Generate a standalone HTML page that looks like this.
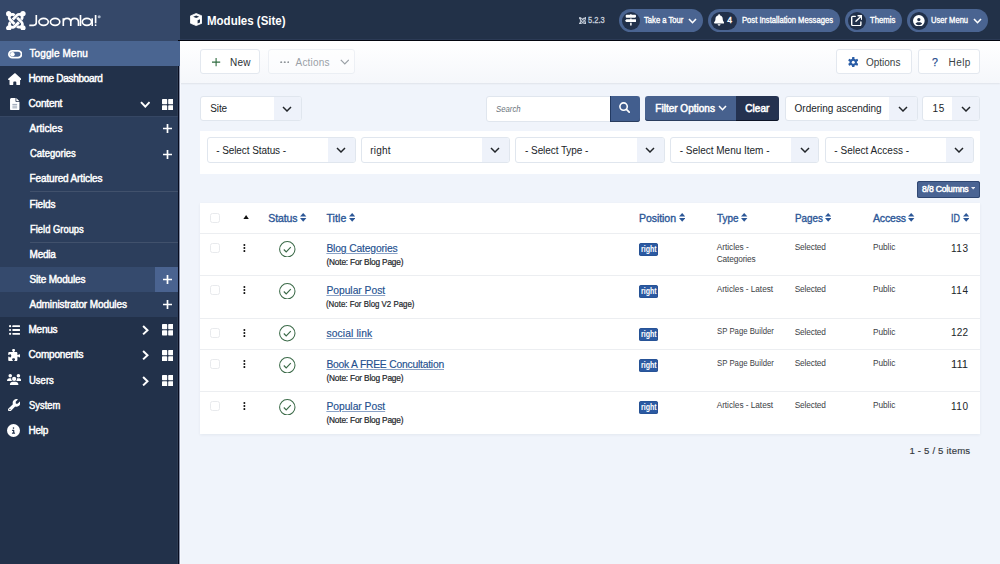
<!DOCTYPE html>
<html><head><meta charset="utf-8"><title>Modules (Site)</title>
<style>
html,body{margin:0;padding:0;width:1000px;height:564px;overflow:hidden;background:#f0f4fb;font-family:"Liberation Sans", sans-serif;}
body{position:relative;}
</style></head><body>
<div style="position:absolute;left:180px;top:41px;width:820px;height:41.5px;background:linear-gradient(#ffffff,#f5f7fb);box-shadow:0 1px 1.5px rgba(0,0,0,.07);"></div>
<div style="position:absolute;left:0px;top:0px;width:180px;height:564px;background:#22314a;"></div>
<div style="position:absolute;left:177px;top:66px;width:1px;height:498px;background:rgba(255,255,255,.05);"></div>
<div style="position:absolute;left:178px;top:66px;width:1px;height:498px;background:#070c1f;"></div>
<div style="position:absolute;left:179px;top:66px;width:1px;height:498px;background:#8a92a8;"></div>
<div style="position:absolute;left:178px;top:41px;width:2px;height:25px;background:#4a6591;"></div>
<div style="position:absolute;left:180px;top:83px;width:1px;height:481px;background:#f7f9fe;"></div>
<div style="position:absolute;left:0px;top:0px;width:180px;height:41px;background:#354869;"></div>
<div style="position:absolute;left:0px;top:41px;width:178px;height:25px;background:#4a6591;"></div>
<div style="position:absolute;left:0px;top:116.3px;width:178px;height:201.2px;background:#2c3e5c;box-shadow:inset 0 1px 0 rgba(255,255,255,.05);"></div>
<div style="position:absolute;left:30px;top:191.2px;width:148px;height:1.0px;background:rgba(255,255,255,.10);"></div>
<div style="position:absolute;left:30px;top:241.6px;width:148px;height:1.0px;background:rgba(255,255,255,.10);"></div>
<div style="position:absolute;left:0px;top:267.2px;width:178px;height:25.150000000000034px;background:#354a6d;"></div>
<div style="position:absolute;left:155px;top:267.2px;width:23px;height:25.150000000000034px;background:#4a6390;"></div>
<svg style="position:absolute;left:6px;top:10.8px;" width="19.7" height="19.7" viewBox="0 32 448 448"><g fill="#fff"><path transform="rotate(0 224 256)" d="M.6 92.1C.6 58.8 27.4 32 60.4 32c30 0 54.5 21.9 59.2 50.2 32.6-7.6 67.1.6 96.5 30l-44.3 44.3c-20.5-20.5-42.6-16.3-55.4-3.5-14.3 14.3-14.3 37.9 0 52.2l99.5 99.5-44 44.3c-87.7-87.2-49.7-49.7-99.8-99.7-26.8-26.5-35-64.8-24.8-98.9C25 161.2 .6 129.9 .6 92.1z"/><path transform="rotate(90 224 256)" d="M.6 92.1C.6 58.8 27.4 32 60.4 32c30 0 54.5 21.9 59.2 50.2 32.6-7.6 67.1.6 96.5 30l-44.3 44.3c-20.5-20.5-42.6-16.3-55.4-3.5-14.3 14.3-14.3 37.9 0 52.2l99.5 99.5-44 44.3c-87.7-87.2-49.7-49.7-99.8-99.7-26.8-26.5-35-64.8-24.8-98.9C25 161.2 .6 129.9 .6 92.1z"/><path transform="rotate(180 224 256)" d="M.6 92.1C.6 58.8 27.4 32 60.4 32c30 0 54.5 21.9 59.2 50.2 32.6-7.6 67.1.6 96.5 30l-44.3 44.3c-20.5-20.5-42.6-16.3-55.4-3.5-14.3 14.3-14.3 37.9 0 52.2l99.5 99.5-44 44.3c-87.7-87.2-49.7-49.7-99.8-99.7-26.8-26.5-35-64.8-24.8-98.9C25 161.2 .6 129.9 .6 92.1z"/><path transform="rotate(270 224 256)" d="M.6 92.1C.6 58.8 27.4 32 60.4 32c30 0 54.5 21.9 59.2 50.2 32.6-7.6 67.1.6 96.5 30l-44.3 44.3c-20.5-20.5-42.6-16.3-55.4-3.5-14.3 14.3-14.3 37.9 0 52.2l99.5 99.5-44 44.3c-87.7-87.2-49.7-49.7-99.8-99.7-26.8-26.5-35-64.8-24.8-98.9C25 161.2 .6 129.9 .6 92.1z"/></g></svg>
<svg style="position:absolute;left:28px;top:13px;" width="75" height="16" viewBox="0 0 75 16"><g stroke="#fff" stroke-width="1.65" fill="none">
<path d="M8.3 2 V9.6 Q8.3 12.3 5.5 12.3 H1.3"/>
<ellipse cx="15.6" cy="8.8" rx="4.7" ry="3.5"/>
<ellipse cx="27.1" cy="8.8" rx="4.7" ry="3.5"/>
<path d="M35.3 13 V5.3 M35.3 9.2 Q35.3 5.3 39.05 5.3 Q42.8 5.3 42.8 9.2 V13 M42.8 9.2 Q42.8 5.3 46.6 5.3 Q50.5 5.3 50.5 9.2 V13"/>
<path d="M52.5 2 V13"/>
<ellipse cx="58.9" cy="8.8" rx="4.6" ry="3.5"/><path d="M64.2 5.3 V13"/>
<path d="M67.6 2 V10.3"/>
</g><circle cx="67.6" cy="12.2" r="0.85" fill="#fff"/><circle cx="71.2" cy="3.8" r="1.5" fill="#aab6c8"/></svg>
<svg style="position:absolute;left:7.6px;top:50px;" width="14.4" height="8.6" viewBox="0 0 14.4 8.6"><rect x="0.9" y="0.9" width="12.6" height="6.8" rx="3.4" fill="none" stroke="#fff" stroke-width="1.8"/><circle cx="4.4" cy="4.3" r="2.3" fill="#fff"/></svg>
<div id="t1" style="position:absolute;left:29.40px;top:49.03px;font-size:10px;line-height:10px;font-weight:400;color:#fff;white-space:nowrap;-webkit-text-stroke:0.45px #fff;letter-spacing:0.123px;">Toggle Menu</div>
<div id="t2" style="position:absolute;left:28.40px;top:73.83px;font-size:10px;line-height:10px;font-weight:400;color:#fff;white-space:nowrap;-webkit-text-stroke:0.45px #fff;letter-spacing:-0.298px;">Home Dashboard</div>
<div id="t3" style="position:absolute;left:28.60px;top:98.98px;font-size:10px;line-height:10px;font-weight:400;color:#fff;white-space:nowrap;-webkit-text-stroke:0.45px #fff;letter-spacing:-0.205px;">Content</div>
<div id="t4" style="position:absolute;left:29.60px;top:124.13px;font-size:10px;line-height:10px;font-weight:400;color:#fff;white-space:nowrap;-webkit-text-stroke:0.45px #fff;letter-spacing:0.000px;">Articles</div>
<div id="t5" style="position:absolute;left:29.60px;top:149.28px;font-size:10px;line-height:10px;font-weight:400;color:#fff;white-space:nowrap;-webkit-text-stroke:0.45px #fff;transform:scaleX(0.9471);transform-origin:0 0;">Categories</div>
<div id="t6" style="position:absolute;left:29.60px;top:174.44px;font-size:10px;line-height:10px;font-weight:400;color:#fff;white-space:nowrap;-webkit-text-stroke:0.45px #fff;letter-spacing:-0.140px;">Featured Articles</div>
<div id="t7" style="position:absolute;left:29.60px;top:199.59px;font-size:10px;line-height:10px;font-weight:400;color:#fff;white-space:nowrap;-webkit-text-stroke:0.45px #fff;letter-spacing:-0.177px;">Fields</div>
<div id="t8" style="position:absolute;left:29.60px;top:224.73px;font-size:10px;line-height:10px;font-weight:400;color:#fff;white-space:nowrap;-webkit-text-stroke:0.45px #fff;transform:scaleX(0.9397);transform-origin:0 0;">Field Groups</div>
<div id="t9" style="position:absolute;left:29.60px;top:249.89px;font-size:10px;line-height:10px;font-weight:400;color:#fff;white-space:nowrap;-webkit-text-stroke:0.45px #fff;letter-spacing:-0.237px;">Media</div>
<div id="t10" style="position:absolute;left:29.60px;top:275.04px;font-size:10px;line-height:10px;font-weight:400;color:#fff;white-space:nowrap;-webkit-text-stroke:0.45px #fff;letter-spacing:-0.183px;">Site Modules</div>
<div id="t11" style="position:absolute;left:29.60px;top:300.19px;font-size:10px;line-height:10px;font-weight:400;color:#fff;white-space:nowrap;-webkit-text-stroke:0.45px #fff;letter-spacing:-0.109px;">Administrator Modules</div>
<div id="t12" style="position:absolute;left:28.60px;top:325.34px;font-size:10px;line-height:10px;font-weight:400;color:#fff;white-space:nowrap;-webkit-text-stroke:0.45px #fff;letter-spacing:-0.304px;">Menus</div>
<div id="t13" style="position:absolute;left:28.60px;top:350.49px;font-size:10px;line-height:10px;font-weight:400;color:#fff;white-space:nowrap;-webkit-text-stroke:0.45px #fff;letter-spacing:-0.211px;">Components</div>
<div id="t14" style="position:absolute;left:28.60px;top:375.64px;font-size:10px;line-height:10px;font-weight:400;color:#fff;white-space:nowrap;-webkit-text-stroke:0.45px #fff;transform:scaleX(0.9493);transform-origin:0 0;">Users</div>
<div id="t15" style="position:absolute;left:28.60px;top:400.79px;font-size:10px;line-height:10px;font-weight:400;color:#fff;white-space:nowrap;-webkit-text-stroke:0.45px #fff;transform:scaleX(0.9387);transform-origin:0 0;">System</div>
<div id="t16" style="position:absolute;left:28.60px;top:425.94px;font-size:10px;line-height:10px;font-weight:400;color:#fff;white-space:nowrap;-webkit-text-stroke:0.45px #fff;letter-spacing:-0.259px;">Help</div>
<svg style="position:absolute;left:7.6px;top:72.5px;" width="13.6" height="12.5" viewBox="0 0 576 512"><path fill="#fff" d="M575.8 255.5c0 18-15 32.1-32 32.1h-32l.7 160.2c0 2.7-.2 5.4-.5 8.1V472c0 22.1-17.9 40-40 40H456c-1.1 0-2.2 0-3.3-.1c-1.4 .1-2.8 .1-4.2 .1H416 392c-22.1 0-40-17.9-40-40V448 384c0-17.7-14.3-32-32-32H256c-17.7 0-32 14.3-32 32v64 24c0 22.1-17.9 40-40 40H160 128.1c-1.5 0-3-.1-4.5-.2c-1.2 .1-2.4 .2-3.6 .2H104c-22.1 0-40-17.9-40-40V360c0-.9 0-1.9 .1-2.8V287.6H32c-18 0-32-14-32-32.1c0-9 3-17 10-24L266.4 8c7-7 15-8 22-8s15 2 21 7L564.8 231.5c8 7 12 15 11 24z"/></svg>
<svg style="position:absolute;left:10px;top:97.8px;" width="9.5" height="12.6" viewBox="0 0 384 512"><path fill="#fff" d="M64 0C28.7 0 0 28.7 0 64V448c0 35.3 28.7 64 64 64H320c35.3 0 64-28.7 64-64V160H256c-17.7 0-32-14.3-32-32V0H64zM256 0V128H384L256 0z"/><g fill="#9aa5b5"><rect x="96" y="240" width="192" height="40"/><rect x="96" y="310" width="192" height="40"/><rect x="96" y="380" width="192" height="40"/></g></svg>
<svg style="position:absolute;left:139.7px;top:100.6px;" width="10.6" height="7.4" viewBox="0 0 10.6 7.4"><path d="M1 1.1 L5.3 5.6 L9.6 1.1" fill="none" stroke="#fff" stroke-width="2"/></svg>
<svg style="position:absolute;left:162.0px;top:98.8px;" width="11.4" height="11.4" viewBox="0 0 11.4 11.4"><g fill="#fff"><rect x="0" y="0" width="5.2" height="5.2" rx="0.7"/><rect x="6.2" y="0" width="5.2" height="5.2" rx="0.7"/><rect x="0" y="6.2" width="5.2" height="5.2" rx="0.7"/><rect x="6.2" y="6.2" width="5.2" height="5.2" rx="0.7"/></g></svg>
<svg style="position:absolute;left:163px;top:124.4px;" width="9" height="9" viewBox="0 0 9 9"><path d="M4.5 0 V9 M0 4.5 H9" stroke="#fff" stroke-width="1.7"/></svg>
<svg style="position:absolute;left:163px;top:149.55px;" width="9" height="9" viewBox="0 0 9 9"><path d="M4.5 0 V9 M0 4.5 H9" stroke="#fff" stroke-width="1.7"/></svg>
<svg style="position:absolute;left:163px;top:275.3px;" width="9" height="9" viewBox="0 0 9 9"><path d="M4.5 0 V9 M0 4.5 H9" stroke="#fff" stroke-width="1.7"/></svg>
<svg style="position:absolute;left:163px;top:300.4px;" width="9" height="9" viewBox="0 0 9 9"><path d="M4.5 0 V9 M0 4.5 H9" stroke="#fff" stroke-width="1.7"/></svg>
<svg style="position:absolute;left:142.2px;top:325.3px;" width="7" height="10.4" viewBox="0 0 7 10.4"><path d="M1.1 1 L5.5 5.2 L1.1 9.4" fill="none" stroke="#fff" stroke-width="2"/></svg>
<svg style="position:absolute;left:162.0px;top:324.40000000000003px;" width="11.4" height="11.4" viewBox="0 0 11.4 11.4"><g fill="#fff"><rect x="0" y="0" width="5.2" height="5.2" rx="0.7"/><rect x="6.2" y="0" width="5.2" height="5.2" rx="0.7"/><rect x="0" y="6.2" width="5.2" height="5.2" rx="0.7"/><rect x="6.2" y="6.2" width="5.2" height="5.2" rx="0.7"/></g></svg>
<svg style="position:absolute;left:142.2px;top:350.4px;" width="7" height="10.4" viewBox="0 0 7 10.4"><path d="M1.1 1 L5.5 5.2 L1.1 9.4" fill="none" stroke="#fff" stroke-width="2"/></svg>
<svg style="position:absolute;left:162.0px;top:349.5px;" width="11.4" height="11.4" viewBox="0 0 11.4 11.4"><g fill="#fff"><rect x="0" y="0" width="5.2" height="5.2" rx="0.7"/><rect x="6.2" y="0" width="5.2" height="5.2" rx="0.7"/><rect x="0" y="6.2" width="5.2" height="5.2" rx="0.7"/><rect x="6.2" y="6.2" width="5.2" height="5.2" rx="0.7"/></g></svg>
<svg style="position:absolute;left:142.2px;top:375.59999999999997px;" width="7" height="10.4" viewBox="0 0 7 10.4"><path d="M1.1 1 L5.5 5.2 L1.1 9.4" fill="none" stroke="#fff" stroke-width="2"/></svg>
<svg style="position:absolute;left:162.0px;top:374.7px;" width="11.4" height="11.4" viewBox="0 0 11.4 11.4"><g fill="#fff"><rect x="0" y="0" width="5.2" height="5.2" rx="0.7"/><rect x="6.2" y="0" width="5.2" height="5.2" rx="0.7"/><rect x="0" y="6.2" width="5.2" height="5.2" rx="0.7"/><rect x="6.2" y="6.2" width="5.2" height="5.2" rx="0.7"/></g></svg>
<svg style="position:absolute;left:8.8px;top:325.2px;" width="11.2" height="10" viewBox="0 0 11.2 10"><g fill="#fff"><circle cx="1.1" cy="1.2" r="1.1"/><circle cx="1.1" cy="5" r="1.1"/><circle cx="1.1" cy="8.8" r="1.1"/><rect x="3.2" y="0.3" width="8" height="1.8" rx="0.9"/><rect x="3.2" y="4.1" width="8" height="1.8" rx="0.9"/><rect x="3.2" y="7.9" width="8" height="1.8" rx="0.9"/></g></svg>
<svg style="position:absolute;left:7.6px;top:349px;" width="12.7" height="12.2" viewBox="0 0 512 512"><path fill="#fff" d="M192 104.8c0-9.2-5.8-17.3-13.2-22.8C167.2 73.3 160 61.3 160 48c0-26.5 28.7-48 64-48s64 21.5 64 48c0 13.3-7.2 25.3-18.8 34c-7.4 5.5-13.2 13.6-13.2 22.8c0 12.8 10.4 23.2 23.2 23.2H336c26.5 0 48 21.5 48 48v56.8c0 12.8 10.4 23.2 23.2 23.2c9.2 0 17.3-5.8 22.8-13.2c8.7-11.6 20.7-18.8 34-18.8c26.5 0 48 28.7 48 64s-21.5 64-48 64c-13.3 0-25.3-7.2-34-18.8c-5.5-7.4-13.6-13.2-22.8-13.2c-12.8 0-23.2 10.4-23.2 23.2V464c0 26.5-21.5 48-48 48H279.2c-12.8 0-23.2-10.4-23.2-23.2c0-9.2 5.8-17.3 13.2-22.8c11.6-8.7 18.8-20.7 18.8-34c0-26.5-28.7-48-64-48s-64 21.5-64 48c0 13.3 7.2 25.3 18.8 34c7.4 5.5 13.2 13.6 13.2 22.8c0 12.8-10.4 23.2-23.2 23.2H48c-26.5 0-48-21.5-48-48V343.2C0 330.4 10.4 320 23.2 320c9.2 0 17.3 5.8 22.8 13.2C54.7 344.8 66.7 352 80 352c26.5 0 48-28.7 48-64s-21.5-64-48-64c-13.3 0-25.3 7.2-34 18.8C40.5 250.2 32.4 256 23.2 256C10.4 256 0 245.6 0 232.8V176c0-26.5 21.5-48 48-48H168.8c12.8 0 23.2-10.4 23.2-23.2z"/></svg>
<svg style="position:absolute;left:7.1px;top:373.8px;" width="14.3" height="11.4" viewBox="0 0 640 512"><path fill="#fff" d="M144 0a80 80 0 1 1 0 160A80 80 0 1 1 144 0zM512 0a80 80 0 1 1 0 160A80 80 0 1 1 512 0zM0 298.7C0 239.8 47.8 192 106.7 192h42.7c15.9 0 31 3.5 44.6 9.7c-1.3 7.2-1.9 14.7-1.9 22.3c0 38.2 16.8 72.5 43.3 96c-.2 0-.4 0-.7 0H21.3C9.6 320 0 310.4 0 298.7zM405.3 320c-.2 0-.4 0-.7 0c26.6-23.5 43.3-57.8 43.3-96c0-7.6-.7-15-1.9-22.3c13.6-6.3 28.7-9.7 44.6-9.7h42.7C592.2 192 640 239.8 640 298.7c0 11.8-9.6 21.3-21.3 21.3H405.3zM224 224a96 96 0 1 1 192 0 96 96 0 1 1 -192 0zM128 485.3C128 411.7 187.7 352 261.3 352H378.7C452.3 352 512 411.7 512 485.3c0 14.7-11.9 26.7-26.7 26.7H154.7c-14.7 0-26.7-11.9-26.7-26.7z"/></svg>
<svg style="position:absolute;left:7.7px;top:398.6px;" width="12.4" height="12.4" viewBox="0 0 512 512"><path fill="#fff" d="M352 320c88.4 0 160-71.6 160-160c0-15.3-2.2-30.1-6.2-44.2c-3.1-10.8-16.4-13.2-24.3-5.3l-76.8 76.8c-3 3-7.1 4.7-11.3 4.7H336c-8.8 0-16-7.2-16-16V118.6c0-4.2 1.7-8.3 4.7-11.3l76.8-76.8c7.9-7.9 5.4-21.2-5.3-24.3C382.1 2.2 367.3 0 352 0C263.6 0 192 71.6 192 160c0 19.1 3.4 37.5 9.5 54.5L19.9 396.1C7.2 408.8 0 426.1 0 444.1C0 481.6 30.4 512 67.9 512c18 0 35.3-7.2 48-19.9L297.5 310.5c17 6.2 35.4 9.5 54.5 9.5zM80 408a24 24 0 1 1 0 48 24 24 0 1 1 0-48z"/></svg>
<svg style="position:absolute;left:7.2px;top:423.5px;" width="13" height="13" viewBox="0 0 512 512"><path fill="#fff" d="M256 512A256 256 0 1 0 256 0a256 256 0 1 0 0 512zM216 336h24V272H216c-13.3 0-24-10.7-24-24s10.7-24 24-24h48c13.3 0 24 10.7 24 24v88h8c13.3 0 24 10.7 24 24s-10.7 24-24 24H216c-13.3 0-24-10.7-24-24s10.7-24 24-24zm40-208a32 32 0 1 1 0 64 32 32 0 1 1 0-64z"/></svg>
<div style="position:absolute;left:180px;top:0px;width:820px;height:40px;background:#223148;"></div>
<div style="position:absolute;left:180px;top:39px;width:820px;height:1px;background:#2b3a55;"></div>
<div style="position:absolute;left:178px;top:40px;width:822px;height:1px;background:#03060f;"></div>
<svg style="position:absolute;left:189.7px;top:13px;" width="12.4" height="13" viewBox="0 0 12.4 13"><path fill="#fff" stroke="#fff" stroke-width="0.8" stroke-linejoin="round" d="M6.2 0.5 L11.9 2.9 V10.2 L6.2 12.6 L0.5 10.2 V2.9 Z"/><path fill="#223148" d="M6.2 2.6 L9.2 3.8 L6.2 5 L3.2 3.8Z"/><path fill="#223148" d="M7.6 7.2 L10 6.2 V9.6 L7.6 10.6Z"/></svg>
<div id="t17" style="position:absolute;left:206.90px;top:14.52px;font-size:12.5px;line-height:12.5px;font-weight:700;color:#fff;white-space:nowrap;transform:scaleX(0.9201);transform-origin:0 0;">Modules (Site)</div>
<svg style="position:absolute;left:578.7px;top:16.5px;" width="7.6" height="7.6" viewBox="0 32 448 448"><g fill="#c8d0dc"><path transform="rotate(0 224 256)" d="M.6 92.1C.6 58.8 27.4 32 60.4 32c30 0 54.5 21.9 59.2 50.2 32.6-7.6 67.1.6 96.5 30l-44.3 44.3c-20.5-20.5-42.6-16.3-55.4-3.5-14.3 14.3-14.3 37.9 0 52.2l99.5 99.5-44 44.3c-87.7-87.2-49.7-49.7-99.8-99.7-26.8-26.5-35-64.8-24.8-98.9C25 161.2 .6 129.9 .6 92.1z"/><path transform="rotate(90 224 256)" d="M.6 92.1C.6 58.8 27.4 32 60.4 32c30 0 54.5 21.9 59.2 50.2 32.6-7.6 67.1.6 96.5 30l-44.3 44.3c-20.5-20.5-42.6-16.3-55.4-3.5-14.3 14.3-14.3 37.9 0 52.2l99.5 99.5-44 44.3c-87.7-87.2-49.7-49.7-99.8-99.7-26.8-26.5-35-64.8-24.8-98.9C25 161.2 .6 129.9 .6 92.1z"/><path transform="rotate(180 224 256)" d="M.6 92.1C.6 58.8 27.4 32 60.4 32c30 0 54.5 21.9 59.2 50.2 32.6-7.6 67.1.6 96.5 30l-44.3 44.3c-20.5-20.5-42.6-16.3-55.4-3.5-14.3 14.3-14.3 37.9 0 52.2l99.5 99.5-44 44.3c-87.7-87.2-49.7-49.7-99.8-99.7-26.8-26.5-35-64.8-24.8-98.9C25 161.2 .6 129.9 .6 92.1z"/><path transform="rotate(270 224 256)" d="M.6 92.1C.6 58.8 27.4 32 60.4 32c30 0 54.5 21.9 59.2 50.2 32.6-7.6 67.1.6 96.5 30l-44.3 44.3c-20.5-20.5-42.6-16.3-55.4-3.5-14.3 14.3-14.3 37.9 0 52.2l99.5 99.5-44 44.3c-87.7-87.2-49.7-49.7-99.8-99.7-26.8-26.5-35-64.8-24.8-98.9C25 161.2 .6 129.9 .6 92.1z"/></g></svg>
<div id="t18" style="position:absolute;left:587.66px;top:16.42px;font-size:8.6px;line-height:8.6px;font-weight:400;color:#c8d0dc;white-space:nowrap;-webkit-text-stroke:0.3px #c8d0dc;transform:scaleX(0.8726);transform-origin:0 0;">5.2.3</div>
<div style="position:absolute;left:619px;top:9px;width:84px;height:23px;background:#4a6491;border-radius:12px;"></div>
<div style="position:absolute;left:621.5px;top:11.5px;width:18.0px;height:18.0px;background:#21304a;border-radius:9px;"></div>
<div style="position:absolute;left:708px;top:9px;width:132px;height:23px;background:#4a6491;border-radius:12px;"></div>
<div style="position:absolute;left:710.5px;top:11.5px;width:26.5px;height:18.0px;background:#21304a;border-radius:9px;"></div>
<div style="position:absolute;left:845px;top:9px;width:57px;height:23px;background:#4a6491;border-radius:12px;"></div>
<div style="position:absolute;left:847.5px;top:11.5px;width:18.0px;height:18.0px;background:#21304a;border-radius:9px;"></div>
<div style="position:absolute;left:907px;top:9px;width:81px;height:23px;background:#4a6491;border-radius:12px;"></div>
<div style="position:absolute;left:909.5px;top:11.5px;width:18.0px;height:18.0px;background:#21304a;border-radius:9px;"></div>
<div id="t19" style="position:absolute;left:643.66px;top:16.42px;font-size:8.6px;line-height:8.6px;font-weight:400;color:#fff;white-space:nowrap;-webkit-text-stroke:0.35px #fff;transform:scaleX(0.8895);transform-origin:0 0;">Take a Tour</div>
<div id="t20" style="position:absolute;left:741.66px;top:16.32px;font-size:8.6px;line-height:8.6px;font-weight:400;color:#fff;white-space:nowrap;-webkit-text-stroke:0.35px #fff;transform:scaleX(0.8900);transform-origin:0 0;">Post Installation Messages</div>
<div id="t21" style="position:absolute;left:869.66px;top:16.32px;font-size:8.6px;line-height:8.6px;font-weight:400;color:#fff;white-space:nowrap;-webkit-text-stroke:0.35px #fff;transform:scaleX(0.9007);transform-origin:0 0;">Themis</div>
<div id="t22" style="position:absolute;left:931.46px;top:16.32px;font-size:8.6px;line-height:8.6px;font-weight:400;color:#fff;white-space:nowrap;-webkit-text-stroke:0.35px #fff;transform:scaleX(0.8824);transform-origin:0 0;">User Menu</div>
<div id="t23" style="position:absolute;left:727.16px;top:16.32px;font-size:8.6px;line-height:8.6px;font-weight:400;color:#fff;white-space:nowrap;-webkit-text-stroke:0.4px #fff;">4</div>
<svg style="position:absolute;left:687.5px;top:17.5px;" width="9" height="6.5" viewBox="0 0 9 6.5"><path d="M1 1 L4.5 4.7 L8 1" fill="none" stroke="#fff" stroke-width="1.6"/></svg>
<svg style="position:absolute;left:973px;top:17.5px;" width="9" height="6.5" viewBox="0 0 9 6.5"><path d="M1 1 L4.5 4.7 L8 1" fill="none" stroke="#fff" stroke-width="1.6"/></svg>
<svg style="position:absolute;left:624.6px;top:14.4px;" width="11.8" height="11.8" viewBox="0 0 512 512"><path fill="#fff" d="M224 32H64C46.3 32 32 46.3 32 64v64c0 17.7 14.3 32 32 32H441.4c4.2 0 8.3-1.7 11.3-4.7l48-48c6.2-6.2 6.2-16.4 0-22.6l-48-48c-3-3-7.1-4.7-11.3-4.7H288c0-17.7-14.3-32-32-32s-32 14.3-32 32zM480 256c0-17.7-14.3-32-32-32H288V192H224v32H70.6c-4.2 0-8.3 1.7-11.3 4.7l-48 48c-6.2 6.2-6.2 16.4 0 22.6l48 48c3 3 7.1 4.7 11.3 4.7H448c17.7 0 32-14.3 32-32V256zM288 480V384H224v96c0 17.7 14.3 32 32 32s32-14.3 32-32z"/></svg>
<svg style="position:absolute;left:714px;top:14.3px;" width="10.2" height="11.7" viewBox="0 0 448 512"><path fill="#fff" d="M224 0c-17.7 0-32 14.3-32 32V51.2C119 66 64 130.6 64 208v18.8c0 47-17.3 92.4-48.5 127.6l-7.4 8.3c-8.4 9.4-10.4 22.9-5.3 34.4S19.4 416 32 416H416c12.6 0 24-7.4 29.2-18.9s3.1-25-5.3-34.4l-7.4-8.3C401.3 319.2 384 273.9 384 226.8V208c0-77.4-55-142-128-156.8V32c0-17.7-14.3-32-32-32zm45.3 493.3c12-12 18.7-28.3 18.7-45.3H224 160c0 17 6.7 33.3 18.7 45.3s28.3 18.7 45.3 18.7s33.3-6.7 45.3-18.7z"/></svg>
<svg style="position:absolute;left:850.5px;top:14.6px;" width="11.3" height="11.3" viewBox="0 0 512 512"><path fill="#fff" d="M320 0c-17.7 0-32 14.3-32 32s14.3 32 32 32h82.7L201.4 265.4c-12.5 12.5-12.5 32.8 0 45.3s32.8 12.5 45.3 0L448 109.3V192c0 17.7 14.3 32 32 32s32-14.3 32-32V32c0-17.7-14.3-32-32-32H320zM80 32C35.8 32 0 67.8 0 112V432c0 44.2 35.8 80 80 80H400c44.2 0 80-35.8 80-80V320c0-17.7-14.3-32-32-32s-32 14.3-32 32V432c0 8.8-7.2 16-16 16H80c-8.8 0-16-7.2-16-16V112c0-8.8 7.2-16 16-16H192c17.7 0 32-14.3 32-32s-14.3-32-32-32H80z"/></svg>
<svg style="position:absolute;left:913px;top:14.6px;" width="11.7" height="11.7" viewBox="0 0 512 512"><path fill="#fff" d="M399 384.2C376.9 345.8 335.4 320 288 320H224c-47.4 0-88.9 25.8-111 64.2c35.2 39.2 86.2 63.8 143 63.8s107.8-24.7 143-63.8zM0 256a256 256 0 1 1 512 0A256 256 0 1 1 0 256zm256 16a72 72 0 1 0 0-144 72 72 0 1 0 0 144z"/></svg>
<div style="position:absolute;left:200.3px;top:49.4px;width:60.19999999999999px;height:24.9px;background:#fff;border:1px solid #e3e8ef;border-radius:3px;box-sizing:border-box;"></div>
<svg style="position:absolute;left:212.4px;top:58.4px;" width="8.2" height="8.2" viewBox="0 0 8.2 8.2"><path d="M4.1 0 V8.2 M0 4.1 H8.2" stroke="#2e6b3f" stroke-width="1.1"/></svg>
<div id="t24" style="position:absolute;left:230.10px;top:57.63px;font-size:10px;line-height:10px;font-weight:400;color:#2b3035;white-space:nowrap;letter-spacing:0.142px;">New</div>
<div style="position:absolute;left:268.2px;top:49.4px;width:87.30000000000001px;height:24.9px;background:#fff;border:1px solid #e3e8ef;border-radius:3px;box-sizing:border-box;opacity:.55;"></div>
<svg style="position:absolute;left:279.8px;top:60.5px;opacity:.6" width="9.5" height="2.5" viewBox="0 0 9.5 2.5"><g fill="#495057"><circle cx="1.2" cy="1.2" r="1"/><circle cx="4.75" cy="1.2" r="1"/><circle cx="8.3" cy="1.2" r="1"/></g></svg>
<div id="t25" style="position:absolute;left:295.60px;top:57.63px;font-size:10px;line-height:10px;font-weight:400;color:#9aa0a6;white-space:nowrap;letter-spacing:0.167px;">Actions</div>
<svg style="position:absolute;left:339.6px;top:59.2px;" width="9.6" height="6.2" viewBox="0 0 9.6 6.2"><path d="M0.8 0.8 L4.8 4.9 L8.8 0.8" fill="none" stroke="#9aa0a6" stroke-width="1.2"/></svg>
<div style="position:absolute;left:836px;top:49.4px;width:75.60000000000002px;height:24.9px;background:#fff;border:1px solid #e3e8ef;border-radius:3px;box-sizing:border-box;"></div>
<svg style="position:absolute;left:847.8px;top:56.5px;" width="10.5" height="10.5" viewBox="0 0 10.5 10.5"><g fill="#2a5da6"><circle cx="5.25" cy="5.25" r="3.6"/><g transform="translate(5.25 5.25)"><rect x="-1.2" y="-5.25" width="2.4" height="10.5" rx="0.6"/><rect x="-1.2" y="-5.25" width="2.4" height="10.5" rx="0.6" transform="rotate(60)"/><rect x="-1.2" y="-5.25" width="2.4" height="10.5" rx="0.6" transform="rotate(120)"/></g></g><circle cx="5.25" cy="5.25" r="1.5" fill="#fff"/></svg>
<div id="t26" style="position:absolute;left:866.00px;top:57.63px;font-size:10px;line-height:10px;font-weight:400;color:#3a3f44;white-space:nowrap;letter-spacing:-0.011px;">Options</div>
<div style="position:absolute;left:918.4px;top:49.4px;width:61.80000000000007px;height:24.9px;background:#fff;border:1px solid #e3e8ef;border-radius:3px;box-sizing:border-box;"></div>
<div id="t27" style="position:absolute;left:931.88px;top:57.33px;font-size:10.6px;line-height:10.6px;font-weight:400;color:#2a4f8f;white-space:nowrap;-webkit-text-stroke:0.25px #2a4f8f;">?</div>
<div id="t28" style="position:absolute;left:948.60px;top:57.63px;font-size:10px;line-height:10px;font-weight:400;color:#3a3f44;white-space:nowrap;letter-spacing:0.407px;">Help</div>
<div style="position:absolute;left:200.2px;top:96px;width:101.40000000000003px;height:25.400000000000006px;background:#fff;border:1px solid #e0e6ee;border-radius:3px;box-sizing:border-box;"></div>
<div style="position:absolute;left:273.6px;top:97px;width:27.0px;height:23.400000000000006px;background:#eef2fa;border-radius:0 2px 2px 0;"></div>
<div id="t29" style="position:absolute;left:210.20px;top:103.53px;font-size:10px;line-height:10px;font-weight:400;color:#212529;white-space:nowrap;letter-spacing:-0.078px;">Site</div>
<svg style="position:absolute;left:282.3px;top:105.7px;" width="10" height="6.5" viewBox="0 0 10 6.5"><path d="M1 1 L5 5 L9 1" fill="none" stroke="#212529" stroke-width="1.45"/></svg>
<div style="position:absolute;left:486px;top:96px;width:125px;height:25.5px;background:#fff;border:1px solid #e0e6ee;border-radius:3px;box-sizing:border-box;border-radius:3px 0 0 3px;"></div>
<div id="t30" style="position:absolute;left:495.66px;top:105.22px;font-size:8.6px;line-height:8.6px;font-weight:400;color:#6c757d;white-space:nowrap;font-style:italic;transform:scaleX(0.9065);transform-origin:0 0;">Search</div>
<div style="position:absolute;left:610px;top:96px;width:30px;height:25.5px;background:#425e8e;border-radius:0 3px 3px 0;box-shadow:inset 1px 0 0 #233a62, inset 0 -1px 0 #2a3d5e;"></div>
<svg style="position:absolute;left:619.3px;top:102.4px;" width="11" height="11" viewBox="0 0 11 11"><circle cx="4.6" cy="4.6" r="3.7" fill="none" stroke="#fff" stroke-width="1.6"/><path d="M7.4 7.4 L10.2 10.2" stroke="#fff" stroke-width="1.7" stroke-linecap="round"/></svg>
<div style="position:absolute;left:645.2px;top:96px;width:90.79999999999995px;height:25px;background:#47618e;border-radius:3px 0 0 3px;box-shadow:inset 0 -1px 0 #2a3d5e;"></div>
<div style="position:absolute;left:736px;top:96px;width:42.700000000000045px;height:25px;background:#243250;border-radius:0 3px 3px 0;box-shadow:inset 0 -1px 0 #0d1426;"></div>
<div id="t31" style="position:absolute;left:655.30px;top:103.73px;font-size:10px;line-height:10px;font-weight:400;color:#fff;white-space:nowrap;-webkit-text-stroke:0.5px #fff;letter-spacing:0.010px;">Filter Options</div>
<svg style="position:absolute;left:717.5px;top:105px;" width="9" height="6.5" viewBox="0 0 9 6.5"><path d="M1 1 L4.5 4.7 L8 1" fill="none" stroke="#fff" stroke-width="1.6"/></svg>
<div id="t32" style="position:absolute;left:745.30px;top:103.73px;font-size:10px;line-height:10px;font-weight:400;color:#fff;white-space:nowrap;-webkit-text-stroke:0.55px #fff;letter-spacing:0.048px;">Clear</div>
<div style="position:absolute;left:784.6px;top:96px;width:133.0px;height:25.400000000000006px;background:#fff;border:1px solid #e0e6ee;border-radius:3px;box-sizing:border-box;"></div>
<div style="position:absolute;left:888.6px;top:97px;width:28.0px;height:23.400000000000006px;background:#eef2fa;border-radius:0 2px 2px 0;"></div>
<div id="t33" style="position:absolute;left:794.60px;top:103.73px;font-size:10px;line-height:10px;font-weight:400;color:#212529;white-space:nowrap;letter-spacing:-0.011px;">Ordering ascending</div>
<svg style="position:absolute;left:898.2px;top:105.7px;" width="10" height="6.5" viewBox="0 0 10 6.5"><path d="M1 1 L5 5 L9 1" fill="none" stroke="#212529" stroke-width="1.45"/></svg>
<div style="position:absolute;left:922.4px;top:96px;width:57.200000000000045px;height:25.400000000000006px;background:#fff;border:1px solid #e0e6ee;border-radius:3px;box-sizing:border-box;"></div>
<div style="position:absolute;left:951.6px;top:97px;width:27.0px;height:23.400000000000006px;background:#eef2fa;border-radius:0 2px 2px 0;"></div>
<div id="t34" style="position:absolute;left:932.60px;top:103.73px;font-size:10px;line-height:10px;font-weight:400;color:#212529;white-space:nowrap;letter-spacing:0.675px;">15</div>
<svg style="position:absolute;left:960.5px;top:105.7px;" width="10" height="6.5" viewBox="0 0 10 6.5"><path d="M1 1 L5 5 L9 1" fill="none" stroke="#212529" stroke-width="1.45"/></svg>
<div style="position:absolute;left:200px;top:131px;width:780px;height:43px;background:#fff;"></div>
<div style="position:absolute;left:206.5px;top:137.2px;width:149.2px;height:25.5px;background:#fff;border:1px solid #e0e6ee;border-radius:3px;box-sizing:border-box;"></div>
<div style="position:absolute;left:327.7px;top:138.2px;width:27.0px;height:23.5px;background:#eef2fa;border-radius:0 2px 2px 0;"></div>
<div id="t35" style="position:absolute;left:216.20px;top:145.63px;font-size:10px;line-height:10px;font-weight:400;color:#212529;white-space:nowrap;letter-spacing:-0.078px;">- Select Status -</div>
<svg style="position:absolute;left:336.2px;top:146.95px;" width="10" height="6.5" viewBox="0 0 10 6.5"><path d="M1 1 L5 5 L9 1" fill="none" stroke="#212529" stroke-width="1.45"/></svg>
<div style="position:absolute;left:360.6px;top:137.2px;width:149.2px;height:25.5px;background:#fff;border:1px solid #e0e6ee;border-radius:3px;box-sizing:border-box;"></div>
<div style="position:absolute;left:481.8px;top:138.2px;width:27.0px;height:23.5px;background:#eef2fa;border-radius:0 2px 2px 0;"></div>
<div id="t36" style="position:absolute;left:370.30px;top:145.63px;font-size:10px;line-height:10px;font-weight:400;color:#212529;white-space:nowrap;letter-spacing:0.212px;">right</div>
<svg style="position:absolute;left:490.3px;top:146.95px;" width="10" height="6.5" viewBox="0 0 10 6.5"><path d="M1 1 L5 5 L9 1" fill="none" stroke="#212529" stroke-width="1.45"/></svg>
<div style="position:absolute;left:515.4px;top:137.2px;width:149.19999999999993px;height:25.5px;background:#fff;border:1px solid #e0e6ee;border-radius:3px;box-sizing:border-box;"></div>
<div style="position:absolute;left:636.5999999999999px;top:138.2px;width:27.0px;height:23.5px;background:#eef2fa;border-radius:0 2px 2px 0;"></div>
<div id="t37" style="position:absolute;left:525.10px;top:145.63px;font-size:10px;line-height:10px;font-weight:400;color:#212529;white-space:nowrap;letter-spacing:-0.078px;">- Select Type -</div>
<svg style="position:absolute;left:645.0999999999999px;top:146.95px;" width="10" height="6.5" viewBox="0 0 10 6.5"><path d="M1 1 L5 5 L9 1" fill="none" stroke="#212529" stroke-width="1.45"/></svg>
<div style="position:absolute;left:670px;top:137.2px;width:149.20000000000005px;height:25.5px;background:#fff;border:1px solid #e0e6ee;border-radius:3px;box-sizing:border-box;"></div>
<div style="position:absolute;left:791.2px;top:138.2px;width:27.0px;height:23.5px;background:#eef2fa;border-radius:0 2px 2px 0;"></div>
<div id="t38" style="position:absolute;left:679.70px;top:145.63px;font-size:10px;line-height:10px;font-weight:400;color:#212529;white-space:nowrap;letter-spacing:-0.012px;">- Select Menu Item -</div>
<svg style="position:absolute;left:799.7px;top:146.95px;" width="10" height="6.5" viewBox="0 0 10 6.5"><path d="M1 1 L5 5 L9 1" fill="none" stroke="#212529" stroke-width="1.45"/></svg>
<div style="position:absolute;left:824.6px;top:137.2px;width:149.19999999999993px;height:25.5px;background:#fff;border:1px solid #e0e6ee;border-radius:3px;box-sizing:border-box;"></div>
<div style="position:absolute;left:945.8px;top:138.2px;width:27.0px;height:23.5px;background:#eef2fa;border-radius:0 2px 2px 0;"></div>
<div id="t39" style="position:absolute;left:834.30px;top:145.63px;font-size:10px;line-height:10px;font-weight:400;color:#212529;white-space:nowrap;letter-spacing:0.021px;">- Select Access -</div>
<svg style="position:absolute;left:954.3px;top:146.95px;" width="10" height="6.5" viewBox="0 0 10 6.5"><path d="M1 1 L5 5 L9 1" fill="none" stroke="#212529" stroke-width="1.45"/></svg>
<div style="position:absolute;left:917px;top:180.5px;width:62.5px;height:17.0px;background:#4a6493;border-radius:2.5px;box-shadow:inset 0 0 0 0.9px #2f4670;"></div>
<div id="t40" style="position:absolute;left:922.06px;top:184.92px;font-size:8.6px;line-height:8.6px;font-weight:400;color:#fff;white-space:nowrap;-webkit-text-stroke:0.5px #fff;letter-spacing:-0.166px;">8/8 Columns</div>
<svg style="position:absolute;left:970.8px;top:187.2px;" width="4.4" height="2.6" viewBox="0 0 4.4 2.6"><path d="M0 0 H4.4 L2.2 2.6Z" fill="#e8ecf4"/></svg>
<div style="position:absolute;left:200px;top:203px;width:780px;height:231px;background:#fff;box-shadow:0 1px 3px rgba(20,30,50,.06);"></div>
<div style="position:absolute;left:200px;top:233px;width:780px;height:1px;background:#eceef1;"></div>
<div style="position:absolute;left:200px;top:275px;width:780px;height:1px;background:#eceef1;"></div>
<div style="position:absolute;left:200px;top:317.5px;width:780px;height:1.0px;background:#eceef1;"></div>
<div style="position:absolute;left:200px;top:349px;width:780px;height:1px;background:#eceef1;"></div>
<div style="position:absolute;left:200px;top:391px;width:780px;height:1px;background:#eceef1;"></div>
<div style="position:absolute;left:210.2px;top:213px;width:10.100000000000023px;height:10.199999999999989px;border:1px solid #e8eaed;border-radius:2.5px;box-sizing:border-box;background:#fff;"></div>
<svg style="position:absolute;left:242.5px;top:214.8px;" width="6.2" height="4.6" viewBox="0 0 6.2 4.6"><path d="M0 4.6 L3.1 0 L6.2 4.6Z" fill="#111"/></svg>
<div id="t41" style="position:absolute;left:268.28px;top:213.21px;font-size:10.5px;line-height:10.5px;font-weight:400;color:#2c5797;white-space:nowrap;-webkit-text-stroke:0.35px #2c5797;letter-spacing:-0.088px;">Status</div>
<svg style="position:absolute;left:300.2px;top:213.3px;" width="6.4" height="8.7" viewBox="0 0 6.4 8.7"><g fill="#2c5797"><path d="M3.2 0 L6.4 3.6 H0Z"/><path d="M3.2 8.7 L6.4 5.1 H0Z"/></g></svg>
<div id="t42" style="position:absolute;left:326.38px;top:213.21px;font-size:10.5px;line-height:10.5px;font-weight:400;color:#2c5797;white-space:nowrap;-webkit-text-stroke:0.35px #2c5797;letter-spacing:0.147px;">Title</div>
<svg style="position:absolute;left:348.8px;top:213.3px;" width="6.4" height="8.7" viewBox="0 0 6.4 8.7"><g fill="#2c5797"><path d="M3.2 0 L6.4 3.6 H0Z"/><path d="M3.2 8.7 L6.4 5.1 H0Z"/></g></svg>
<div id="t43" style="position:absolute;left:638.98px;top:213.21px;font-size:10.5px;line-height:10.5px;font-weight:400;color:#2c5797;white-space:nowrap;-webkit-text-stroke:0.35px #2c5797;letter-spacing:-0.046px;">Position</div>
<svg style="position:absolute;left:678.5px;top:213.3px;" width="6.4" height="8.7" viewBox="0 0 6.4 8.7"><g fill="#2c5797"><path d="M3.2 0 L6.4 3.6 H0Z"/><path d="M3.2 8.7 L6.4 5.1 H0Z"/></g></svg>
<div id="t44" style="position:absolute;left:717.18px;top:213.21px;font-size:10.5px;line-height:10.5px;font-weight:400;color:#2c5797;white-space:nowrap;-webkit-text-stroke:0.35px #2c5797;transform:scaleX(0.9462);transform-origin:0 0;">Type</div>
<svg style="position:absolute;left:741.4px;top:213.3px;" width="6.4" height="8.7" viewBox="0 0 6.4 8.7"><g fill="#2c5797"><path d="M3.2 0 L6.4 3.6 H0Z"/><path d="M3.2 8.7 L6.4 5.1 H0Z"/></g></svg>
<div id="t45" style="position:absolute;left:794.98px;top:213.21px;font-size:10.5px;line-height:10.5px;font-weight:400;color:#2c5797;white-space:nowrap;-webkit-text-stroke:0.35px #2c5797;transform:scaleX(0.9415);transform-origin:0 0;">Pages</div>
<svg style="position:absolute;left:825px;top:213.3px;" width="6.4" height="8.7" viewBox="0 0 6.4 8.7"><g fill="#2c5797"><path d="M3.2 0 L6.4 3.6 H0Z"/><path d="M3.2 8.7 L6.4 5.1 H0Z"/></g></svg>
<div id="t46" style="position:absolute;left:872.98px;top:213.21px;font-size:10.5px;line-height:10.5px;font-weight:400;color:#2c5797;white-space:nowrap;-webkit-text-stroke:0.35px #2c5797;letter-spacing:-0.161px;">Access</div>
<svg style="position:absolute;left:908.2px;top:213.3px;" width="6.4" height="8.7" viewBox="0 0 6.4 8.7"><g fill="#2c5797"><path d="M3.2 0 L6.4 3.6 H0Z"/><path d="M3.2 8.7 L6.4 5.1 H0Z"/></g></svg>
<div id="t47" style="position:absolute;left:951.18px;top:213.21px;font-size:10.5px;line-height:10.5px;font-weight:400;color:#2c5797;white-space:nowrap;-webkit-text-stroke:0.35px #2c5797;transform:scaleX(0.8419);transform-origin:0 0;">ID</div>
<svg style="position:absolute;left:962.6px;top:213.3px;" width="6.4" height="8.7" viewBox="0 0 6.4 8.7"><g fill="#2c5797"><path d="M3.2 0 L6.4 3.6 H0Z"/><path d="M3.2 8.7 L6.4 5.1 H0Z"/></g></svg>
<div style="position:absolute;left:210.2px;top:243.3px;width:10.100000000000023px;height:10.199999999999989px;border:1px solid #e8eaed;border-radius:2.5px;box-sizing:border-box;background:#fff;"></div>
<svg style="position:absolute;left:242.8px;top:244px;" width="3" height="8.2" viewBox="0 0 3 8.2"><g fill="#111"><circle cx="1.4" cy="1.1" r="1"/><circle cx="1.4" cy="4.1" r="1"/><circle cx="1.4" cy="7.1" r="1"/></g></svg>
<svg style="position:absolute;left:279.3px;top:240.8px;" width="16.6" height="16.6" viewBox="0 0 16.6 16.6"><circle cx="8.3" cy="8.3" r="7.7" fill="none" stroke="#3b6a48" stroke-width="1.05"/><path d="M4.8 8.5 L7.2 10.9 L11.8 6.2" fill="none" stroke="#3b6a48" stroke-width="1.15"/></svg>
<div id="t48" style="position:absolute;left:326.39px;top:244.08px;font-size:10.3px;line-height:10.3px;font-weight:400;color:#24508f;white-space:nowrap;-webkit-text-stroke:0.15px #24508f;letter-spacing:-0.139px;text-decoration:underline;text-underline-offset:1px;text-decoration-thickness:1px;text-decoration-color:rgba(60,100,160,.6);">Blog Categories</div>
<div id="t49" style="position:absolute;left:326.47px;top:257.67px;font-size:8.3px;line-height:8.3px;font-weight:400;color:#212529;white-space:nowrap;-webkit-text-stroke:0.2px #212529;letter-spacing:-0.187px;">(Note: For Blog Page)</div>
<div style="position:absolute;left:638.8px;top:243px;width:19.600000000000023px;height:13.199999999999989px;background:#2c5aa2;border-radius:2.5px;box-shadow:inset 0 0 0 0.6px #234c8c;"></div>
<div id="t50" style="position:absolute;left:641.06px;top:245.22px;font-size:8.6px;line-height:8.6px;font-weight:700;color:#fff;white-space:nowrap;transform:scaleX(0.8216);transform-origin:0 0;">right</div>
<div id="t51" style="position:absolute;left:716.67px;top:242.77px;font-size:8.3px;line-height:8.3px;font-weight:400;color:#3c4146;white-space:nowrap;letter-spacing:-0.013px;">Articles -</div>
<div id="t52" style="position:absolute;left:716.67px;top:254.57px;font-size:8.3px;line-height:8.3px;font-weight:400;color:#3c4146;white-space:nowrap;letter-spacing:-0.129px;">Categories</div>
<div id="t53" style="position:absolute;left:794.67px;top:243.07px;font-size:8.3px;line-height:8.3px;font-weight:400;color:#3c4146;white-space:nowrap;letter-spacing:-0.148px;">Selected</div>
<div id="t54" style="position:absolute;left:873.07px;top:243.07px;font-size:8.3px;line-height:8.3px;font-weight:400;color:#3c4146;white-space:nowrap;letter-spacing:-0.069px;">Public</div>
<div id="t55" style="position:absolute;left:951.00px;top:243.73px;font-size:10px;line-height:10px;font-weight:400;color:#212529;white-space:nowrap;letter-spacing:0.523px;">113</div>
<div style="position:absolute;left:210.2px;top:285.3px;width:10.100000000000023px;height:10.199999999999989px;border:1px solid #e8eaed;border-radius:2.5px;box-sizing:border-box;background:#fff;"></div>
<svg style="position:absolute;left:242.8px;top:286px;" width="3" height="8.2" viewBox="0 0 3 8.2"><g fill="#111"><circle cx="1.4" cy="1.1" r="1"/><circle cx="1.4" cy="4.1" r="1"/><circle cx="1.4" cy="7.1" r="1"/></g></svg>
<svg style="position:absolute;left:279.3px;top:282.8px;" width="16.6" height="16.6" viewBox="0 0 16.6 16.6"><circle cx="8.3" cy="8.3" r="7.7" fill="none" stroke="#3b6a48" stroke-width="1.05"/><path d="M4.8 8.5 L7.2 10.9 L11.8 6.2" fill="none" stroke="#3b6a48" stroke-width="1.15"/></svg>
<div id="t56" style="position:absolute;left:326.39px;top:286.08px;font-size:10.3px;line-height:10.3px;font-weight:400;color:#24508f;white-space:nowrap;-webkit-text-stroke:0.15px #24508f;letter-spacing:-0.013px;text-decoration:underline;text-underline-offset:1px;text-decoration-thickness:1px;text-decoration-color:rgba(60,100,160,.6);">Popular Post</div>
<div id="t57" style="position:absolute;left:326.47px;top:299.67px;font-size:8.3px;line-height:8.3px;font-weight:400;color:#212529;white-space:nowrap;-webkit-text-stroke:0.2px #212529;transform:scaleX(0.9496);transform-origin:0 0;">(Note: For Blog V2 Page)</div>
<div style="position:absolute;left:638.8px;top:285px;width:19.600000000000023px;height:13.199999999999989px;background:#2c5aa2;border-radius:2.5px;box-shadow:inset 0 0 0 0.6px #234c8c;"></div>
<div id="t58" style="position:absolute;left:641.06px;top:287.22px;font-size:8.6px;line-height:8.6px;font-weight:700;color:#fff;white-space:nowrap;transform:scaleX(0.8216);transform-origin:0 0;">right</div>
<div id="t59" style="position:absolute;left:716.67px;top:284.77px;font-size:8.3px;line-height:8.3px;font-weight:400;color:#3c4146;white-space:nowrap;letter-spacing:-0.045px;">Articles - Latest</div>
<div id="t60" style="position:absolute;left:794.67px;top:285.07px;font-size:8.3px;line-height:8.3px;font-weight:400;color:#3c4146;white-space:nowrap;letter-spacing:-0.148px;">Selected</div>
<div id="t61" style="position:absolute;left:873.07px;top:285.07px;font-size:8.3px;line-height:8.3px;font-weight:400;color:#3c4146;white-space:nowrap;letter-spacing:-0.069px;">Public</div>
<div id="t62" style="position:absolute;left:951.00px;top:285.74px;font-size:10px;line-height:10px;font-weight:400;color:#212529;white-space:nowrap;letter-spacing:0.523px;">114</div>
<div style="position:absolute;left:210.2px;top:327.8px;width:10.100000000000023px;height:10.199999999999989px;border:1px solid #e8eaed;border-radius:2.5px;box-sizing:border-box;background:#fff;"></div>
<svg style="position:absolute;left:242.8px;top:328.5px;" width="3" height="8.2" viewBox="0 0 3 8.2"><g fill="#111"><circle cx="1.4" cy="1.1" r="1"/><circle cx="1.4" cy="4.1" r="1"/><circle cx="1.4" cy="7.1" r="1"/></g></svg>
<svg style="position:absolute;left:279.3px;top:325.3px;" width="16.6" height="16.6" viewBox="0 0 16.6 16.6"><circle cx="8.3" cy="8.3" r="7.7" fill="none" stroke="#3b6a48" stroke-width="1.05"/><path d="M4.8 8.5 L7.2 10.9 L11.8 6.2" fill="none" stroke="#3b6a48" stroke-width="1.15"/></svg>
<div id="t63" style="position:absolute;left:326.39px;top:328.58px;font-size:10.3px;line-height:10.3px;font-weight:400;color:#24508f;white-space:nowrap;-webkit-text-stroke:0.15px #24508f;letter-spacing:0.118px;text-decoration:underline;text-underline-offset:1px;text-decoration-thickness:1px;text-decoration-color:rgba(60,100,160,.6);">social link</div>
<div style="position:absolute;left:638.8px;top:327.5px;width:19.600000000000023px;height:13.199999999999989px;background:#2c5aa2;border-radius:2.5px;box-shadow:inset 0 0 0 0.6px #234c8c;"></div>
<div id="t64" style="position:absolute;left:641.06px;top:329.72px;font-size:8.6px;line-height:8.6px;font-weight:700;color:#fff;white-space:nowrap;transform:scaleX(0.8216);transform-origin:0 0;">right</div>
<div id="t65" style="position:absolute;left:716.67px;top:327.27px;font-size:8.3px;line-height:8.3px;font-weight:400;color:#3c4146;white-space:nowrap;transform:scaleX(0.9363);transform-origin:0 0;">SP Page Builder</div>
<div id="t66" style="position:absolute;left:794.67px;top:327.57px;font-size:8.3px;line-height:8.3px;font-weight:400;color:#3c4146;white-space:nowrap;letter-spacing:-0.148px;">Selected</div>
<div id="t67" style="position:absolute;left:873.07px;top:327.57px;font-size:8.3px;line-height:8.3px;font-weight:400;color:#3c4146;white-space:nowrap;letter-spacing:-0.069px;">Public</div>
<div id="t68" style="position:absolute;left:951.00px;top:328.24px;font-size:10px;line-height:10px;font-weight:400;color:#212529;white-space:nowrap;letter-spacing:0.156px;">122</div>
<div style="position:absolute;left:210.2px;top:359.3px;width:10.100000000000023px;height:10.199999999999989px;border:1px solid #e8eaed;border-radius:2.5px;box-sizing:border-box;background:#fff;"></div>
<svg style="position:absolute;left:242.8px;top:360px;" width="3" height="8.2" viewBox="0 0 3 8.2"><g fill="#111"><circle cx="1.4" cy="1.1" r="1"/><circle cx="1.4" cy="4.1" r="1"/><circle cx="1.4" cy="7.1" r="1"/></g></svg>
<svg style="position:absolute;left:279.3px;top:356.8px;" width="16.6" height="16.6" viewBox="0 0 16.6 16.6"><circle cx="8.3" cy="8.3" r="7.7" fill="none" stroke="#3b6a48" stroke-width="1.05"/><path d="M4.8 8.5 L7.2 10.9 L11.8 6.2" fill="none" stroke="#3b6a48" stroke-width="1.15"/></svg>
<div id="t69" style="position:absolute;left:326.39px;top:360.08px;font-size:10.3px;line-height:10.3px;font-weight:400;color:#24508f;white-space:nowrap;-webkit-text-stroke:0.15px #24508f;letter-spacing:-0.203px;text-decoration:underline;text-underline-offset:1px;text-decoration-thickness:1px;text-decoration-color:rgba(60,100,160,.6);">Book A FREE Concultation</div>
<div id="t70" style="position:absolute;left:326.47px;top:373.67px;font-size:8.3px;line-height:8.3px;font-weight:400;color:#212529;white-space:nowrap;-webkit-text-stroke:0.2px #212529;letter-spacing:-0.187px;">(Note: For Blog Page)</div>
<div style="position:absolute;left:638.8px;top:359px;width:19.600000000000023px;height:13.199999999999989px;background:#2c5aa2;border-radius:2.5px;box-shadow:inset 0 0 0 0.6px #234c8c;"></div>
<div id="t71" style="position:absolute;left:641.06px;top:361.22px;font-size:8.6px;line-height:8.6px;font-weight:700;color:#fff;white-space:nowrap;transform:scaleX(0.8216);transform-origin:0 0;">right</div>
<div id="t72" style="position:absolute;left:716.67px;top:358.77px;font-size:8.3px;line-height:8.3px;font-weight:400;color:#3c4146;white-space:nowrap;transform:scaleX(0.9363);transform-origin:0 0;">SP Page Builder</div>
<div id="t73" style="position:absolute;left:794.67px;top:359.07px;font-size:8.3px;line-height:8.3px;font-weight:400;color:#3c4146;white-space:nowrap;letter-spacing:-0.148px;">Selected</div>
<div id="t74" style="position:absolute;left:873.07px;top:359.07px;font-size:8.3px;line-height:8.3px;font-weight:400;color:#3c4146;white-space:nowrap;letter-spacing:-0.069px;">Public</div>
<div id="t75" style="position:absolute;left:951.00px;top:359.74px;font-size:10px;line-height:10px;font-weight:400;color:#212529;white-space:nowrap;transform:scaleX(1.1182);transform-origin:0 0;">111</div>
<div style="position:absolute;left:210.2px;top:401.3px;width:10.100000000000023px;height:10.199999999999989px;border:1px solid #e8eaed;border-radius:2.5px;box-sizing:border-box;background:#fff;"></div>
<svg style="position:absolute;left:242.8px;top:402px;" width="3" height="8.2" viewBox="0 0 3 8.2"><g fill="#111"><circle cx="1.4" cy="1.1" r="1"/><circle cx="1.4" cy="4.1" r="1"/><circle cx="1.4" cy="7.1" r="1"/></g></svg>
<svg style="position:absolute;left:279.3px;top:398.8px;" width="16.6" height="16.6" viewBox="0 0 16.6 16.6"><circle cx="8.3" cy="8.3" r="7.7" fill="none" stroke="#3b6a48" stroke-width="1.05"/><path d="M4.8 8.5 L7.2 10.9 L11.8 6.2" fill="none" stroke="#3b6a48" stroke-width="1.15"/></svg>
<div id="t76" style="position:absolute;left:326.39px;top:402.08px;font-size:10.3px;line-height:10.3px;font-weight:400;color:#24508f;white-space:nowrap;-webkit-text-stroke:0.15px #24508f;letter-spacing:-0.013px;text-decoration:underline;text-underline-offset:1px;text-decoration-thickness:1px;text-decoration-color:rgba(60,100,160,.6);">Popular Post</div>
<div id="t77" style="position:absolute;left:326.47px;top:415.67px;font-size:8.3px;line-height:8.3px;font-weight:400;color:#212529;white-space:nowrap;-webkit-text-stroke:0.2px #212529;letter-spacing:-0.187px;">(Note: For Blog Page)</div>
<div style="position:absolute;left:638.8px;top:401px;width:19.600000000000023px;height:13.199999999999989px;background:#2c5aa2;border-radius:2.5px;box-shadow:inset 0 0 0 0.6px #234c8c;"></div>
<div id="t78" style="position:absolute;left:641.06px;top:403.22px;font-size:8.6px;line-height:8.6px;font-weight:700;color:#fff;white-space:nowrap;transform:scaleX(0.8216);transform-origin:0 0;">right</div>
<div id="t79" style="position:absolute;left:716.67px;top:400.77px;font-size:8.3px;line-height:8.3px;font-weight:400;color:#3c4146;white-space:nowrap;letter-spacing:-0.045px;">Articles - Latest</div>
<div id="t80" style="position:absolute;left:794.67px;top:401.07px;font-size:8.3px;line-height:8.3px;font-weight:400;color:#3c4146;white-space:nowrap;letter-spacing:-0.148px;">Selected</div>
<div id="t81" style="position:absolute;left:873.07px;top:401.07px;font-size:8.3px;line-height:8.3px;font-weight:400;color:#3c4146;white-space:nowrap;letter-spacing:-0.069px;">Public</div>
<div id="t82" style="position:absolute;left:951.00px;top:401.74px;font-size:10px;line-height:10px;font-weight:400;color:#212529;white-space:nowrap;letter-spacing:0.523px;">110</div>
<div id="t83" style="position:absolute;left:909.42px;top:445.97px;font-size:9.6px;line-height:9.6px;font-weight:400;color:#33383d;white-space:nowrap;-webkit-text-stroke:0.15px #33383d;letter-spacing:0.189px;">1 - 5 / 5 items</div>
</body></html>
